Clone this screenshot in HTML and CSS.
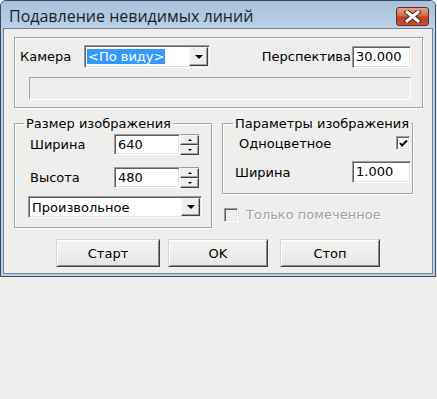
FILE: index.html
```html
<!DOCTYPE html>
<html lang="ru">
<head>
    <meta charset="UTF-8">
    <title>Подавление невидимых линий</title>
    <link rel="stylesheet" href="styles.css">
</head>
<body>
    <div class="window">
        <div class="titlebar">
            <span class="title">Подавление невидимых линий</span>
            <div class="close-btn">
                <svg width="17" height="13" viewBox="0 0 17 13">
                    <path d="M3 2 L14 11 M14 2 L3 11" stroke="#5a2418" stroke-width="5" stroke-linecap="square"/>
                    <path d="M3 2 L14 11 M14 2 L3 11" stroke="#ffffff" stroke-width="3" stroke-linecap="square"/>
                </svg>
            </div>
        </div>
        <div class="frame">
            <div class="client">
                <div class="group camera-group">
                    <div class="camera-row">
                        <span class="camera-label">Камера</span>
                        <div class="combo camera-combo">
                            <span class="combo-text"><span class="selected">&lt;По виду&gt;</span></span>
                            <span class="combo-btn"><span class="arrow-down"></span></span>
                        </div>
                        <span class="persp-label">Перспектива</span>
                        <div class="field persp-field">30.000</div>
                    </div>
                    <div class="status-field"></div>
                </div>

                <div class="columns">
                    <fieldset class="box size-box">
                        <legend>Размер изображения</legend>
                        <div class="size-row">
                            <span class="size-label">Ширина</span>
                            <div class="spin-box">
                                <div class="field spin-value">640</div>
                                <span class="spin">
                                    <span class="spin-btn"><span class="arrow-up-small"></span></span>
                                    <span class="spin-btn"><span class="arrow-down-small"></span></span>
                                </span>
                            </div>
                        </div>
                        <div class="size-row second">
                            <span class="size-label">Высота</span>
                            <div class="spin-box">
                                <div class="field spin-value">480</div>
                                <span class="spin">
                                    <span class="spin-btn"><span class="arrow-up-small"></span></span>
                                    <span class="spin-btn"><span class="arrow-down-small"></span></span>
                                </span>
                            </div>
                        </div>
                        <div class="combo format-combo">
                            <span class="combo-text">Произвольное</span>
                            <span class="combo-btn"><span class="arrow-down"></span></span>
                        </div>
                    </fieldset>

                    <div class="right-col">
                        <fieldset class="box params-box">
                            <legend>Параметры изображения</legend>
                            <div class="mono-row">
                                <span>Одноцветное</span>
                                <span class="checkbox checked">
                                    <svg width="9" height="9" viewBox="0 0 9 9">
                                        <path d="M1 4 L3 6.5 L8 1.5" stroke="#000" stroke-width="2" fill="none"/>
                                    </svg>
                                </span>
                            </div>
                            <div class="width-row">
                                <span>Ширина</span>
                                <div class="field width-field">1.000</div>
                            </div>
                        </fieldset>
                        <div class="marked-row">
                            <span class="checkbox disabled"></span>
                            <span class="marked-label">Только помеченное</span>
                        </div>
                    </div>
                </div>

                <div class="buttons">
                    <div class="btn btn-start">Старт</div>
                    <div class="btn btn-ok">OK</div>
                    <div class="btn btn-stop">Стоп</div>
                </div>
            </div>
        </div>
    </div>
</body>
</html>
```

FILE: styles.css
```css
body {
    margin: 0;
    padding: 0;
    background: #eeefec;
    font-family: 'DejaVu Sans', sans-serif;
    font-size: 13px;
    color: #000;
}
.window {
    width: 436px;
    box-sizing: border-box;
    border: 1px solid #3a4a5c;
    border-radius: 6px 6px 0 0;
    background: #bcd0e5;
}
.titlebar {
    height: 27px;
    display: flex;
    align-items: center;
    justify-content: space-between;
    background: linear-gradient(#a7c1dc, #bcd0e6);
    border-radius: 5px 5px 0 0;
}
.title {
    margin-left: 8px;
    margin-top: 3px;
    font-family: 'Open Sans', sans-serif;
    font-size: 16px;
    color: #141e2a;
}
.close-btn {
    width: 33px;
    height: 19px;
    box-sizing: border-box;
    margin-right: 6px;
    margin-top: 4px;
    border: 1px solid #6c2a1c;
    border-radius: 3px;
    background: linear-gradient(#e3a58f 0%, #d06a4e 45%, #bd4426 55%, #c2502f 100%);
    display: flex;
    align-items: center;
    justify-content: center;
}
.frame {
    padding: 0 2px 2px 2px;
}
.client {
    border: 1px solid #6e8196;
    background: #eeefec;
    padding: 8px 0 6px 10px;
}

/* camera group */
.group {
    box-sizing: border-box;
    border: 1px solid #a3a3a3;
    box-shadow: inset 1px 1px #fff, 1px 1px #fff;
}
.camera-group {
    width: 409px;
    padding: 7px 11px 7px 5px;
}
.camera-row {
    display: flex;
    align-items: center;
    height: 23px;
}
.camera-label {
    width: 64px;
}
.combo {
    box-sizing: border-box;
    display: flex;
    align-items: center;
    background: #fff;
    border: 1px solid;
    border-color: #9a9a9a #fff #fff #9a9a9a;
    box-shadow: inset 1px 1px #5f5f5f, inset -1px -1px #e3e3e3;
    padding: 1px 1px 1px 2px;
}
.camera-combo {
    width: 126px;
    height: 23px;
}
.combo-text {
    flex: 1;
    line-height: 15px;
    white-space: nowrap;
}
.selected {
    background: #3399ff;
    color: #fff;
    padding: 0 1px;
}
.combo-btn {
    width: 19px;
    height: 100%;
    box-sizing: border-box;
    background: #eeefec;
    border: 1px solid;
    border-color: #f4f4f4 #404040 #404040 #f4f4f4;
    box-shadow: inset -1px -1px #a0a0a0;
    display: flex;
    align-items: center;
    justify-content: center;
}
.arrow-down {
    width: 0;
    height: 0;
    border-left: 4px solid transparent;
    border-right: 4px solid transparent;
    border-top: 4px solid #000;
}
.persp-label {
    margin-left: auto;
    margin-right: 1px;
}
.field {
    box-sizing: border-box;
    background: #fff;
    border: 1px solid;
    border-color: #9a9a9a #fff #fff #9a9a9a;
    box-shadow: inset 1px 1px #5f5f5f, inset -1px -1px #e3e3e3;
    padding: 2px 3px;
    line-height: 16px;
}
.persp-field {
    width: 59px;
    height: 22px;
}
.status-field {
    margin: 9px 0 0 9px;
    height: 23px;
    box-sizing: border-box;
    border: 1px solid;
    border-color: #a0a0a0 #fff #fff #a0a0a0;
}

/* lower groups */
.columns {
    display: flex;
    align-items: flex-start;
    gap: 10px;
    margin-top: 8px;
}
.box {
    margin: 0;
    padding: 0;
    border: 1px solid #a3a3a3;
    box-shadow: inset 1px 1px #fff, 1px 1px #fff;
    box-sizing: border-box;
}
.box legend {
    padding: 0 2px;
    line-height: 15px;
}
.size-box {
    width: 198px;
    padding: 3px 0 9px 0;
}
.size-box legend {
    margin-left: 9px;
}
.size-row {
    display: flex;
    align-items: center;
}
.size-row.second {
    margin-top: 12px;
}
.size-label {
    width: 84px;
    padding-left: 15px;
}
.spin-box {
    display: flex;
    height: 21px;
    border-top: 1px solid #9a9a9a;
    box-sizing: border-box;
}
.spin-value {
    width: 66px;
    height: 21px;
    margin-top: -1px;
    padding-top: 2px;
}
.spin {
    width: 19px;
    height: 20px;
    display: flex;
    flex-direction: column;
    background: #fff;
}
.spin-btn {
    flex: 1;
    box-sizing: border-box;
    background: #eeefec;
    border: 1px solid;
    border-color: #f4f4f4 #404040 #404040 #f4f4f4;
    box-shadow: inset -1px -1px #a0a0a0;
    display: flex;
    align-items: center;
    justify-content: center;
}
.arrow-up-small {
    border-left: 2px solid transparent;
    border-right: 2px solid transparent;
    border-bottom: 2px solid #000;
}
.arrow-down-small {
    border-left: 2px solid transparent;
    border-right: 2px solid transparent;
    border-top: 2px solid #000;
}
.format-combo {
    width: 174px;
    height: 22px;
    margin: 8px 0 0 13px;
    padding-left: 3px;
}

.right-col {
    display: flex;
    flex-direction: column;
}
.params-box {
    width: 191px;
    padding: 5px 1px 10px 0;
}
.params-box legend {
    margin-left: 10px;
}
.mono-row {
    display: flex;
    align-items: center;
    justify-content: space-between;
    height: 14px;
    padding-left: 16px;
    padding-right: 1px;
}
.checkbox {
    width: 14px;
    height: 14px;
    box-sizing: border-box;
    border: 1px solid;
    border-color: #9a9a9a #fff #fff #9a9a9a;
    box-shadow: inset 1px 1px #5f5f5f, inset -1px -1px #e3e3e3;
    background: #fff;
    display: flex;
    align-items: center;
    justify-content: center;
}
.checkbox.disabled {
    background: #eeefec;
}
.width-row {
    display: flex;
    align-items: center;
    justify-content: space-between;
    margin-top: 11px;
    padding-left: 12px;
}
.width-field {
    width: 59px;
    height: 22px;
}
.marked-row {
    display: flex;
    align-items: center;
    margin-top: 13px;
    margin-left: 2px;
}
.marked-label {
    margin-left: 8px;
    color: #a0a0a0;
    text-shadow: 1px 1px #fff;
}

/* bottom buttons */
.buttons {
    display: flex;
    margin-top: 11px;
}
.btn {
    height: 28px;
    box-sizing: border-box;
    border: 1px solid;
    border-color: #d4d4d4 #404040 #404040 #d4d4d4;
    box-shadow: inset 1px 1px #fff, inset -1px -1px #8a8a8a;
    background: linear-gradient(#f5f5f3, #e6e7e4);
    display: flex;
    align-items: center;
    justify-content: center;
}
.btn-start {
    width: 104px;
    margin-left: 42px;
}
.btn-ok {
    width: 100px;
    margin-left: 8px;
}
.btn-stop {
    width: 100px;
    margin-left: 12px;
}
```
